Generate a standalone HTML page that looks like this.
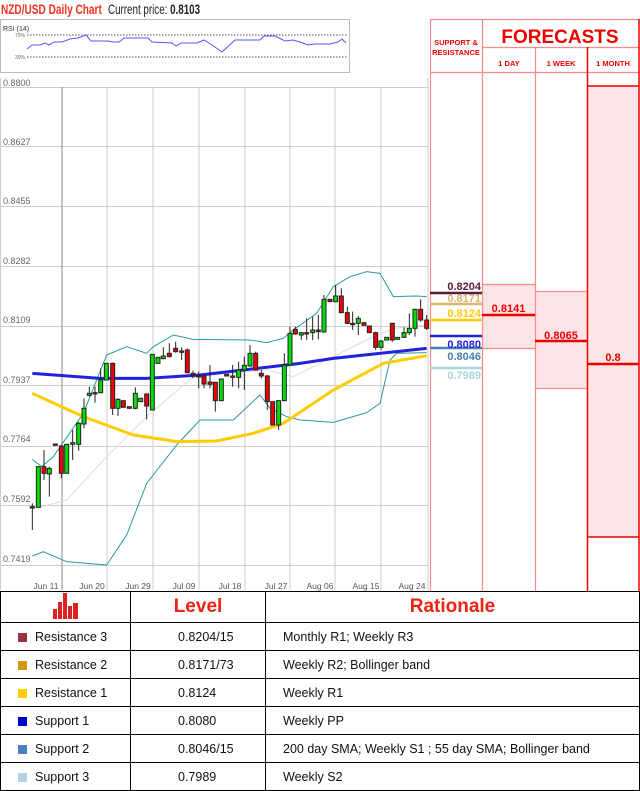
<!DOCTYPE html>
<html><head><meta charset="utf-8"><style>
*{margin:0;padding:0;box-sizing:border-box}
body{width:640px;height:789px;background:#fff;font-family:"Liberation Sans",sans-serif;position:relative;overflow:hidden}
.abs{position:absolute}
table{position:absolute;left:0;top:591px;width:640px;border-collapse:collapse;font-family:"Liberation Sans",sans-serif;font-size:12.5px;color:#111}
td{border:1.5px solid #000;height:28px;padding:0;white-space:nowrap}
.sq{display:inline-block;width:9px;height:9px;margin:0 8px 0 17px;vertical-align:-1px}
</style></head><body>
<div class="abs" style="left:1px;top:1px;font-size:14px;font-weight:bold;color:#e32;transform:scaleX(0.72);transform-origin:0 0;white-space:nowrap">NZD/USD Daily Chart</div>
<div class="abs" style="left:108px;top:1px;font-size:14px;color:#222;transform:scaleX(0.7);transform-origin:0 0;white-space:nowrap">Current price: <b>0.8103</b></div>
<svg class="abs" style="left:0;top:0" width="640" height="600" viewBox="0 0 640 600">
<rect x="0.5" y="19.5" width="349" height="53" fill="#fff" stroke="#bbb"/>
<text x="3" y="31" font-size="7" font-family="Liberation Sans" fill="#333">RSI (14)</text>
<text x="15" y="37" font-size="5" fill="#666">70%</text><text x="15" y="59" font-size="5" fill="#666">30%</text>
<line x1="27" y1="35" x2="348" y2="35" stroke="#555" stroke-dasharray="1.5,1.5"/>
<line x1="27" y1="57" x2="348" y2="57" stroke="#555" stroke-dasharray="1.5,1.5"/>
<polyline fill="none" stroke="#55f" stroke-width="1" points="27,49 32,45 40,45 45,43 49,45 54,42 62,42 70,39 78,38 86,35 91,41 108,41 113,42 119,42 124,38 148,38 152,42 172,43 176,46 181,43 197,43 204,40 212,45 222,52 235,40 260,40 264,36 275,36 285,41 293,40 303,43 308,45 315,44 330,44 338,42 342,39 346,43"/>
<line x1="0.5" y1="78" x2="0.5" y2="590" stroke="#ccc"/>
<line x1="428" y1="78" x2="428" y2="590" stroke="#ccc"/>
<g font-size="9" fill="#666" font-family="Liberation Sans">
<text x="3" y="86">0.8800</text><text x="3" y="145">0.8627</text><text x="3" y="204">0.8455</text><text x="3" y="264">0.8282</text><text x="3" y="323">0.8109</text><text x="3" y="383">0.7937</text><text x="3" y="442">0.7764</text><text x="3" y="502">0.7592</text><text x="3" y="562">0.7419</text>
</g>
<g stroke="#ccc" stroke-width="1">
<line x1="0" y1="87.5" x2="428" y2="87.5"/><line x1="0" y1="146.5" x2="428" y2="146.5"/><line x1="0" y1="206.5" x2="428" y2="206.5"/><line x1="0" y1="266.5" x2="428" y2="266.5"/><line x1="0" y1="326.5" x2="428" y2="326.5"/><line x1="0" y1="385.5" x2="428" y2="385.5"/><line x1="0" y1="446.5" x2="428" y2="446.5"/><line x1="0" y1="505.5" x2="428" y2="505.5"/><line x1="0" y1="565.5" x2="428" y2="565.5"/>
<line x1="107" y1="87" x2="107" y2="590"/><line x1="153" y1="87" x2="153" y2="590"/><line x1="199" y1="87" x2="199" y2="590"/><line x1="245" y1="87" x2="245" y2="590"/><line x1="290" y1="87" x2="290" y2="590"/><line x1="335" y1="87" x2="335" y2="590"/><line x1="381" y1="87" x2="381" y2="590"/>
</g>
<line x1="62" y1="87" x2="62" y2="590" stroke="#888"/>
<g font-size="8.5" fill="#555" text-anchor="middle">
<text x="46" y="589">Jun 11</text><text x="92" y="589">Jun 20</text><text x="138" y="589">Jun 29</text><text x="184" y="589">Jul 09</text><text x="230" y="589">Jul 18</text><text x="276" y="589">Jul 27</text><text x="320" y="589">Aug 06</text><text x="366" y="589">Aug 15</text><text x="412" y="589">Aug 24</text>
</g>
<g transform="translate(0,260) scale(0.33333)" fill="none">
<polyline stroke="#ddd" stroke-width="3" points="97,748 200,720 320,590 440,470 580,350 800,330 880,350 1000,290 1100,240 1180,205 1280,195"/>
<polyline stroke="#2a9a9a" stroke-width="3" points="97,598 125,620 160,590 250,460 320,285 380,260 440,280 460,260 520,225 580,238 750,240 800,248 850,235 880,210 950,160 1000,80 1050,50 1100,35 1140,40 1180,110 1250,108 1280,110"/>
<polyline stroke="#2a9a9a" stroke-width="3" points="97,888 130,875 200,905 320,915 380,825 440,670 530,555 600,480 700,480 780,405 810,445 860,470 900,480 1000,487 1100,458 1140,430 1170,300 1190,280 1280,278"/>
<polyline stroke="#fc0" stroke-width="9" points="97,400 250,470 400,525 530,545 650,543 760,520 850,490 1000,390 1150,310 1280,287"/>
<polyline stroke="#22d" stroke-width="9" points="97,340 300,355 440,355 600,345 900,310 1000,295 1280,265"/>
</g>
<g id="c" transform="translate(0,260) scale(0.33333)" stroke="#222" stroke-width="3"></g>
<rect x="482" y="284" width="53" height="64" fill="#fde4e6"/>
<rect x="535" y="291" width="52" height="97" fill="#fde4e6"/>
<rect x="587" y="86" width="52" height="451" fill="#fde4e6"/>
<g stroke="#f88" stroke-width="1.2">
<line x1="430.5" y1="19" x2="430.5" y2="591"/><line x1="482.5" y1="47" x2="482.5" y2="591"/><line x1="535.5" y1="47" x2="535.5" y2="591"/>
<line x1="430" y1="19.5" x2="639" y2="19.5"/><line x1="482" y1="47.5" x2="639" y2="47.5"/><line x1="430" y1="72.5" x2="639" y2="72.5"/>
<line x1="482" y1="284.5" x2="535" y2="284.5"/><line x1="482" y1="348.5" x2="535" y2="348.5"/>
<line x1="535" y1="291.5" x2="587" y2="291.5"/><line x1="535" y1="388.5" x2="587" y2="388.5"/>
<line x1="482.5" y1="19" x2="482.5" y2="47"/>
</g>
<g stroke="#e00" stroke-width="1.5">
<line x1="587.5" y1="47" x2="587.5" y2="591"/><line x1="639" y1="19" x2="639" y2="591"/><line x1="587" y1="86" x2="639" y2="86"/><line x1="587" y1="537" x2="639" y2="537"/>
</g>
<g stroke="#e00" stroke-width="2.5">
<line x1="482" y1="315" x2="535" y2="315"/><line x1="535" y1="341" x2="587" y2="341"/><line x1="587" y1="364" x2="639" y2="364"/>
</g>
<g stroke-width="2.5">
<line x1="430" y1="293" x2="482" y2="293" stroke="#5a1a3a"/>
<line x1="430" y1="304" x2="482" y2="304" stroke="#dcb46a"/>
<line x1="430" y1="320" x2="482" y2="320" stroke="#fc0"/>
<line x1="430" y1="336" x2="482" y2="336" stroke="#22d"/>
<line x1="430" y1="348" x2="482" y2="348" stroke="#4a7fae"/>
<line x1="430" y1="368" x2="482" y2="368" stroke="#a9d5d5"/>
</g>
<g font-size="11" font-weight="bold" font-family="Liberation Sans" text-anchor="end">
<text x="481" y="290" fill="#5a1a3a">0.8204</text>
<text x="481" y="302" fill="#dcb46a">0.8171</text>
<text x="481" y="317" fill="#fc0">0.8124</text>
<text x="481" y="348" fill="#22d">0.8080</text>
<text x="481" y="360" fill="#4a7fae">0.8046</text>
<text x="481" y="379" fill="#a9d5d5">0.7989</text>
</g>
<g font-family="Liberation Sans" font-weight="bold" fill="#e00" text-anchor="middle">
<text x="508.5" y="312" font-size="11">0.8141</text>
<text x="561" y="339" font-size="11">0.8065</text>
<text x="613" y="361" font-size="11">0.8</text>
<text x="560" y="43" font-size="19">FORECASTS</text>
<text x="456" y="45" font-size="7.5">SUPPORT &amp;</text>
<text x="456" y="55" font-size="7.5">RESISTANCE</text>
<text x="509" y="66" font-size="7.5">1 DAY</text>
<text x="561" y="66" font-size="7.5">1 WEEK</text>
<text x="613" y="66" font-size="7.5">1 MONTH</text>
</g>
</svg>
<table>
<tr style="height:31px"><td style="width:130px;text-align:center"><svg width="26" height="26" viewBox="0 0 26 26"><g fill="#d22"><rect x="0" y="16" width="4" height="10"/><rect x="5" y="9" width="4" height="17"/><rect x="10" y="0" width="4" height="26"/><rect x="15" y="13" width="4" height="13"/><rect x="20" y="10" width="5" height="16"/></g></svg></td><td style="width:135px;text-align:center;font-weight:bold;font-size:19px;color:#e21">Level</td><td style="text-align:center;font-weight:bold;font-size:19px;color:#e21">Rationale</td></tr>
<tr><td><span class="sq" style="background:#953540"></span>Resistance 3</td><td style="padding-left:47px">0.8204/15</td><td style="padding-left:17px">Monthly R1; Weekly R3</td></tr>
<tr><td><span class="sq" style="background:#d09a10"></span>Resistance 2</td><td style="padding-left:47px">0.8171/73</td><td style="padding-left:17px">Weekly R2; Bollinger band</td></tr>
<tr><td><span class="sq" style="background:#fc0"></span>Resistance 1</td><td style="padding-left:47px">0.8124</td><td style="padding-left:17px">Weekly R1</td></tr>
<tr><td><span class="sq" style="background:#00c"></span>Support 1</td><td style="padding-left:47px">0.8080</td><td style="padding-left:17px">Weekly PP</td></tr>
<tr><td><span class="sq" style="background:#4a7fc0"></span>Support 2</td><td style="padding-left:47px">0.8046/15</td><td style="padding-left:17px">200 day SMA; Weekly S1 ; 55 day SMA; Bollinger band</td></tr>
<tr><td><span class="sq" style="background:#b8d0ea"></span>Support 3</td><td style="padding-left:47px">0.7989</td><td style="padding-left:17px">Weekly S2</td></tr>
</table>
<script>
var d=[[97,740,740,0,730,810],[115,742,620,1],[132,620,640,0,570,660],[148,642,625,1,620,710],[166,552,556,0],[184,558,640,0,555,655],[200,640,553,1],[218,553,548,1,510,600],[236,553,490,1,485,572],[252,492,445,1,415,505],[268,406,400,1,380,410],[285,398,398,0,380,428],[302,398,360,1,325,400],[319,360,310,1],[338,310,445,0,308,465],[354,445,418,1,415,468],[370,422,442,0],[388,440,445,0],[406,445,400,1,382,448],[422,425,415,1],[440,402,438,0,400,478],[457,450,283,1],[474,310,292,1],[490,296,288,1,262,298],[508,280,290,0,250,292],[527,265,275,0,245,278],[545,273,273,0,262,300],[562,270,338,0,265,340],[579,340,345,0,332,355],[596,347,347,0,335,385],[612,348,372,0,345,385],[630,366,373,0,315,385],[646,367,422,0,365,455],[664,422,357,1],[680,343,348,0],[698,350,348,1,315,380],[716,352,330,1,305,385],[733,330,316,1,290,390],[750,318,280,1,255,320],[767,280,330,0,275,332],[784,340,348,0,330,355],[802,348,425,0,345,450],[818,425,495,0],[836,495,422,1,420,510],[853,422,315,1,280,424],[870,315,220,1,200,317],[886,208,222,0,200,224],[904,225,218,1,216,240],[920,218,218,0,175,240],[938,218,210,1,170,240],[955,210,215,0,165,238],[972,216,118,1,105,218],[990,118,125,0],[1007,125,108,1,75,127],[1024,108,158,0,85,160],[1042,158,190,0,140,192],[1058,190,190,0,155,210],[1075,190,175,1,168,225],[1092,188,196,0],[1108,198,218,0],[1127,218,262,0,215,270],[1143,262,243,1,240,270],[1160,240,232,1],[1177,190,240,0,188,245],[1193,238,232,1],[1212,232,218,1,202,234],[1228,218,205,1,160,225],[1245,205,148,1,146,230],[1262,148,180,0,118,185],[1280,180,205,0,165,210]];
var s='';d.forEach(function(c){var x=c[0],t=Math.min(c[1],c[2]),b=Math.max(c[1],c[2]);if(c[4]!==undefined)s+='<line x1="'+x+'" x2="'+x+'" y1="'+c[4]+'" y2="'+c[5]+'"/>';var h=Math.max(b-t,4);s+='<rect x="'+(x-6)+'" y="'+t+'" width="12" height="'+h+'" fill="'+(c[3]?'#0d0':'#e00')+'"/>';});
document.getElementById('c').innerHTML=s;
</script>
</body></html>
